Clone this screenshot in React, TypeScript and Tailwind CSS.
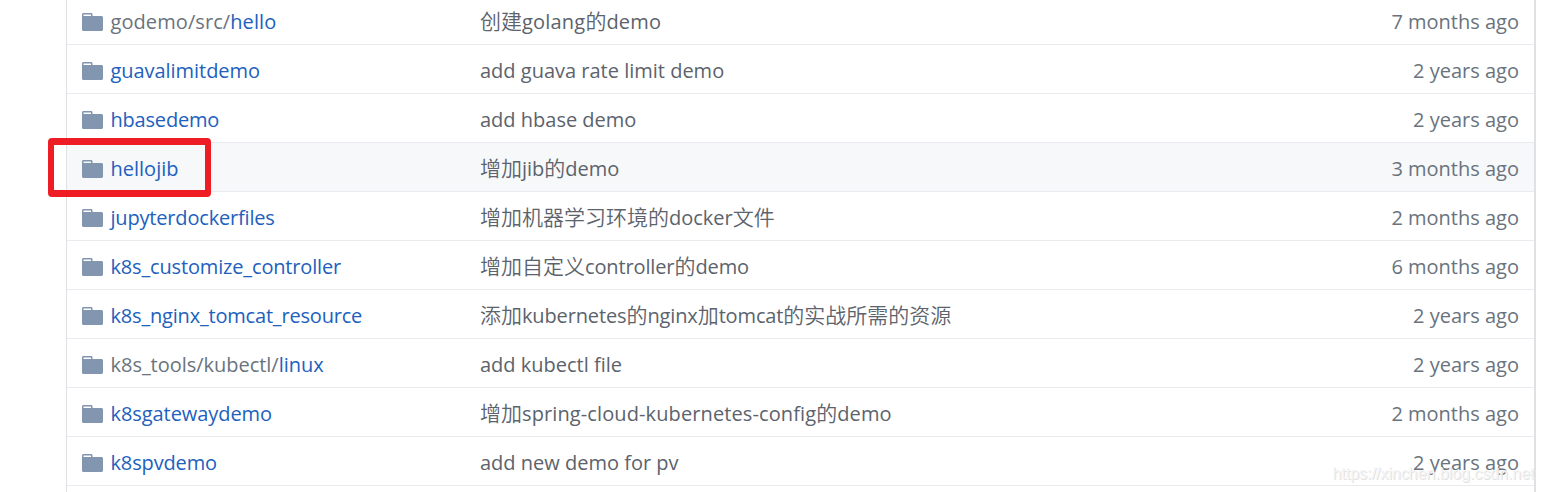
type Row = {
  path?: string;
  name: string;
  nameSpacing?: string;
  message: string;
  messageSpacing?: string;
  age: string;
  active?: boolean;
};

const rows: Row[] = [
  { path: 'godemo/src/', name: 'hello', nameSpacing: 'tracking-[0.08px]', message: '创建golang的demo', messageSpacing: 'tracking-[0.2px]', age: '7 months ago' },
  { name: 'guavalimitdemo', nameSpacing: 'tracking-[-0.05px]', message: 'add guava rate limit demo', age: '2 years ago' },
  { name: 'hbasedemo', nameSpacing: 'tracking-[-0.2px]', message: 'add hbase demo', age: '2 years ago' },
  { name: 'hellojib', message: '增加jib的demo', age: '3 months ago', active: true },
  { name: 'jupyterdockerfiles', nameSpacing: 'tracking-[-0.18px]', message: '增加机器学习环境的docker文件', age: '2 months ago' },
  { name: 'k8s_customize_controller', nameSpacing: 'tracking-[-0.16px]', message: '增加自定义controller的demo', messageSpacing: 'tracking-[-0.13px]', age: '6 months ago' },
  { name: 'k8s_nginx_tomcat_resource', nameSpacing: 'tracking-[-0.19px]', message: '添加kubernetes的nginx加tomcat的实战所需的资源', messageSpacing: 'tracking-[-0.14px]', age: '2 years ago' },
  { path: 'k8s_tools/kubectl/', name: 'linux', nameSpacing: 'tracking-[-0.03px]', message: 'add kubectl file', age: '2 years ago' },
  { name: 'k8sgatewaydemo', nameSpacing: 'tracking-[-0.07px]', message: '增加spring-cloud-kubernetes-config的demo', messageSpacing: 'tracking-[0.11px]', age: '2 months ago' },
  { name: 'k8spvdemo', nameSpacing: 'tracking-[-0.14px]', message: 'add new demo for pv', age: '2 years ago' },
];

function FolderIcon() {
  return (
    <svg className="mt-[3px] h-6 w-[21px] shrink-0" viewBox="0 0 14 16" fill="#8296b0" aria-hidden="true">
      <path d="M13 4H7V3c0-.66-.31-1-1-1H1c-.55 0-1 .45-1 1v10c0 .55.45 1 1 1h12c.55 0 1-.45 1-1V5c0-.55-.45-1-1-1zM6 4H1V3h5v1z" />
    </svg>
  );
}

function Message({ text }: { text: string }) {
  const parts = text.split(/([\u4e00-\u9fff]+)/).filter(Boolean);
  return (
    <>
      {parts.map((part, i) =>
        /[\u4e00-\u9fff]/.test(part) ? (
          <span key={i} className="text-[21px] leading-none font-[350] tracking-normal">{part}</span>
        ) : (
          <span key={i}>{part}</span>
        ),
      )}
    </>
  );
}

function FileRow({ row }: { row: Row }) {
  return (
    <div className={`flex h-[49px] items-start whitespace-nowrap border-b border-[#e9ebee] px-[15px] pt-[11px] ${row.active ? 'bg-[#f6f8fa]' : ''}`}>
      <div className="flex w-[398px] items-start">
        <FolderIcon />
        <span className={`ml-[7.5px] text-[#2160bd] ${row.nameSpacing ?? ''}`}>
          {row.path && <span className="text-[#6a737d]">{row.path}</span>}
          {row.name}
        </span>
      </div>
      <div className={`flex-1 text-[#5c636c] ${row.messageSpacing ?? ''}`}>
        <Message text={row.message} />
      </div>
      <div className="text-right text-[#6a737d]">{row.age}</div>
    </div>
  );
}

export default function App() {
  return (
    <div className="relative h-[492px] w-[1544px] overflow-hidden bg-white font-['Open_Sans','Noto_Sans_CJK_SC',sans-serif] text-[20px] leading-[30px]">
      <div className="-mt-1 mr-2 ml-[66px] h-[500px] border-r-2 border-l border-r-[#dfe2e5] border-l-[#dfe2e5]">
        {rows.map((row) => (
          <FileRow key={row.name} row={row} />
        ))}
      </div>
      <div className="absolute top-[137.5px] left-[47.5px] h-[59px] w-[163px] rounded-[4px] border-x-[6px] border-y-[7px] border-[#ee1c25]" />
      <div className="absolute top-[464px] left-[1332.5px] font-['Liberation_Sans',sans-serif] text-[16px] leading-5 tracking-[-0.03px] text-[#f5f5f5] [text-shadow:1px_1px_0_#e2e2e2]">
        https://xinchen.blog.csdn.net
      </div>
    </div>
  );
}
